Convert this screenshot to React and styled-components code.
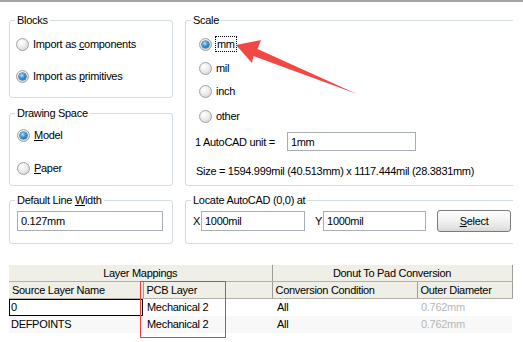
import React from "react";
import styled, { createGlobalStyle } from "styled-components";

const Global = createGlobalStyle`
  html, body { margin: 0; padding: 0; background: #fff; }
`;

const Page = styled.div`
  width: 523px;
  height: 342px;
  box-sizing: border-box;
  border-top: 2px solid #a3a3a3;
  background: #fff;
  position: relative;
  overflow: hidden;
  padding: 12px 10px 0 9px;
  font-family: "Liberation Sans", Arial, sans-serif;
  font-size: 11px;
  letter-spacing: -0.3px;
  color: #000;
`;

const Grid = styled.div`
  display: grid;
  grid-template-columns: 164px 328px;
  column-gap: 12px;
  row-gap: 8px;
`;

const Column = styled.div`
  display: flex;
  flex-direction: column;
  gap: 9px;
`;

const Group = styled.fieldset`
  margin: 0;
  padding: 0;
  box-sizing: border-box;
  min-width: 0;
  height: ${(p) => p.$h}px;
  border: 1px solid #d3dbe3;
  border-radius: 3px;
  ${(p) =>
    p.$open &&
    `border-right: none; border-top-right-radius: 0; border-bottom-right-radius: 0;`}
`;

const Legend = styled.legend`
  margin-left: 5px;
  padding: 0 2px;
  line-height: 13px;
  height: 13px;
`;

const Body = styled.div`
  display: flex;
  flex-direction: column;
  padding: ${(p) => p.$pt}px 0 0 ${(p) => p.$pl}px;
`;

const Row = styled.div`
  display: flex;
  align-items: center;
  height: ${(p) => p.$h || 16}px;
  margin-top: ${(p) => p.$mt || 0}px;
  margin-left: ${(p) => p.$ml || 0}px;
  gap: ${(p) => (p.$gap != null ? p.$gap : 4)}px;
`;

const Radio = styled.span`
  width: 13px;
  height: 13px;
  flex: none;
  box-sizing: border-box;
  border-radius: 50%;
  border: 1px solid #a2a2a2;
  background: radial-gradient(circle at 38% 32%, #ffffff 0%, #ececec 45%, #cacaca 100%);
  position: relative;
  &::after {
    content: "";
    display: ${(p) => (p.$checked ? "block" : "none")};
    position: absolute;
    left: 2px;
    top: 2px;
    width: 7px;
    height: 7px;
    border-radius: 50%;
    background: radial-gradient(circle at 40% 35%, #b6ecff 0%, #3b9be0 40%, #0c4a96 100%);
    box-shadow: 0 0 0 0.6px #2b4f70;
  }
`;

const Key = styled.span`
  text-decoration: underline;
  text-underline-offset: 1px;
`;

const Focus = styled.span`
  outline: 1px dotted #000;
  outline-offset: 1px;
  margin-left: 1px;
`;

const Input = styled.div`
  box-sizing: border-box;
  width: ${(p) => p.$w}px;
  height: ${(p) => p.$h || 20}px;
  margin-left: ${(p) => p.$ml || 0}px;
  border: 1px solid #a7aeb6;
  background: #fff;
  padding-left: 3px;
  display: flex;
  align-items: center;
  flex: none;
`;

const Label = styled.span`
  margin-left: ${(p) => p.$ml || 0}px;
  flex: none;
`;

const Button = styled.button`
  box-sizing: border-box;
  width: 74px;
  height: 22px;
  margin-left: 11px;
  border: 1px solid #7b7b7b;
  border-radius: 3px;
  background: linear-gradient(#fefefe 0%, #f3f3f3 45%, #e2e2e2 85%, #d6d6d6 100%);
  font: inherit;
  letter-spacing: inherit;
  color: #000;
  padding: 0;
`;

const Table = styled.table`
  margin-top: 21px;
  width: 503px;
  border-collapse: collapse;
  table-layout: fixed;
  line-height: 13px;
`;

const HeadCell = styled.th`
  font-weight: normal;
  background: #efeee7;
  height: ${(p) => p.$h}px;
  padding: 0 0 0 ${(p) => (p.$center ? 0 : 3)}px;
  text-align: ${(p) => (p.$center ? "center" : "left")};
  border-bottom: 1px solid #b2b1a9;
  border-right: ${(p) => (p.$sep ? "1px solid #9d9d96" : "none")};
  border-left: ${(p) => (p.$sepL ? "1px solid #9d9d96" : "none")};
  white-space: nowrap;
`;

const DataRow = styled.tr`
  background: ${(p) => (p.$alt ? "#f8f8f8" : "#fff")};
  height: 17px;
`;

const Cell = styled.td`
  padding: 0 0 0 ${(p) => p.$pl || 3}px;
  height: 17px;
  color: ${(p) => (p.$muted ? "#b6b6b6" : "#000")};
  white-space: nowrap;
  ${(p) =>
    p.$selected &&
    `outline: 1px solid #000; outline-offset: -1px; box-shadow: inset -1px -1px 0 #000;`}
`;

const Annotation = styled.div`
  position: absolute;
  left: 140px;
  top: 279px;
  width: 86px;
  height: 57px;
  box-sizing: border-box;
  border: 1px solid #ef3b3b;
  pointer-events: none;
`;

const ArrowSvg = styled.svg`
  position: absolute;
  left: 0;
  top: 0;
  pointer-events: none;
`;

function RadioOption({ checked, indent, mt, children }) {
  return (
    <Row $mt={mt} $ml={indent}>
      <Radio $checked={checked} />
      <span>{children}</span>
    </Row>
  );
}

export default function App() {
  return (
    <>
      <Global />
      <Page>
        <Grid>
          <Column>
            <Group $h={84}>
              <Legend>Blocks</Legend>
              <Body $pt={9} $pl={6}>
                <RadioOption>
                  Import as <Key>c</Key>omponents
                </RadioOption>
                <RadioOption checked mt={16}>
                  Import as <Key>p</Key>rimitives
                </RadioOption>
              </Body>
            </Group>
            <Group $h={79}>
              <Legend>Drawing Space</Legend>
              <Body $pt={7} $pl={7}>
                <RadioOption checked>
                  <Key>M</Key>odel
                </RadioOption>
                <RadioOption mt={17}>
                  <Key>P</Key>aper
                </RadioOption>
              </Body>
            </Group>
          </Column>
          <Group $h={172} $open>
            <Legend>Scale</Legend>
            <Body $pt={9} $pl={9}>
              <RadioOption checked indent={4}>
                <Focus>mm</Focus>
              </RadioOption>
              <RadioOption indent={4} mt={8}>
                mil
              </RadioOption>
              <RadioOption indent={4} mt={7}>
                inch
              </RadioOption>
              <RadioOption indent={4} mt={9}>
                other
              </RadioOption>
              <Row $h={19} $mt={8} $gap={0}>
                <Label>1 AutoCAD unit =</Label>
                <Input $w={129} $h={19} $ml={12}>1mm</Input>
              </Row>
              <Row $mt={12} $ml={1}>
                Size = 1594.999mil (40.513mm) x 1117.444mil (28.3831mm)
              </Row>
            </Body>
          </Group>
          <Group $h={50}>
            <Legend>
              Default Line <Key>W</Key>idth
            </Legend>
            <Body $pt={4} $pl={7}>
              <Input $w={146}>0.127mm</Input>
            </Body>
          </Group>
          <Group $h={50} $open>
            <Legend>Locate AutoCAD (0,0) at</Legend>
            <Body $pt={3} $pl={7}>
              <Row $h={22} $gap={0}>
                <Label>X</Label>
                <Input $w={104} $ml={1}>1000mil</Input>
                <Label $ml={10}>Y</Label>
                <Input $w={103} $ml={1}>1000mil</Input>
                <Button>
                  <Key>S</Key>elect
                </Button>
              </Row>
            </Body>
          </Group>
        </Grid>

        <Table>
          <colgroup>
            <col style={{ width: 134 }} />
            <col style={{ width: 129 }} />
            <col style={{ width: 145 }} />
            <col style={{ width: 95 }} />
          </colgroup>
          <thead>
            <tr>
              <HeadCell colSpan={2} $center $h={16}>
                Layer Mappings
              </HeadCell>
              <HeadCell colSpan={2} $center $h={16} $sepL $sep>
                Donut To Pad Conversion
              </HeadCell>
            </tr>
            <tr>
              <HeadCell $h={16} $sep>Source Layer Name</HeadCell>
              <HeadCell $h={16} $sep>PCB Layer</HeadCell>
              <HeadCell $h={16} $sep>Conversion Condition</HeadCell>
              <HeadCell $h={16} $sep>Outer Diameter</HeadCell>
            </tr>
          </thead>
          <tbody>
            <DataRow>
              <Cell $selected $pl={2}>0</Cell>
              <Cell $pl={4}>Mechanical 2</Cell>
              <Cell $pl={5}>All</Cell>
              <Cell $muted $pl={4}>0.762mm</Cell>
            </DataRow>
            <DataRow $alt>
              <Cell $pl={2}>DEFPOINTS</Cell>
              <Cell $pl={4}>Mechanical 2</Cell>
              <Cell $pl={5}>All</Cell>
              <Cell $muted $pl={4}>0.762mm</Cell>
            </DataRow>
          </tbody>
        </Table>

        <Annotation />
        <ArrowSvg width="523" height="342" viewBox="0 0 523 342">
          <polygon
            points="236,43 261,38 257.5,47 357,92 253.5,54 252,61"
            fill="#f14846"
          />
        </ArrowSvg>
      </Page>
    </>
  );
}
